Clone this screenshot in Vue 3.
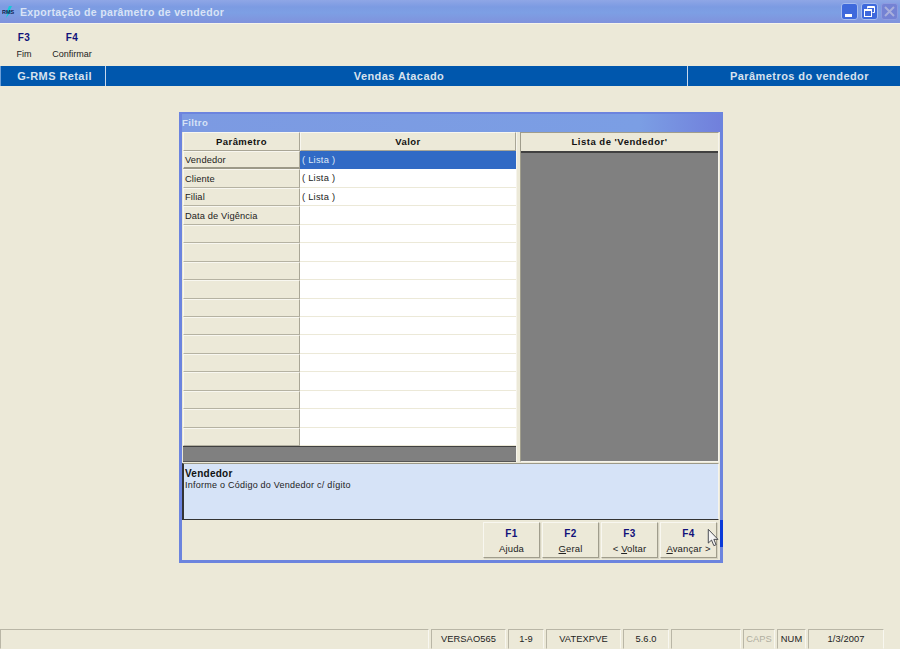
<script setup>
const rows = ['Vendedor', 'Cliente', 'Filial', 'Data de Vigência', '', '', '', '', '', '', '', '', '', '', '', '']
const values = ['( Lista )', '( Lista )', '( Lista )']
const buttons = [
  { key: 'F1', pre: 'A', u: 'j', post: 'uda' },
  { key: 'F2', pre: '', u: 'G', post: 'eral' },
  { key: 'F3', pre: '< ', u: 'V', post: 'oltar' },
  { key: 'F4', pre: '', u: 'A', post: 'vançar >' }
]
const status = [
  { t: '', w: 429 }, { t: 'VERSAO565', w: 75 }, { t: '1-9', w: 36 }, { t: 'VATEXPVE', w: 75 },
  { t: '5.6.0', w: 46 }, { t: '', w: 70 }, { t: 'CAPS', w: 32, off: true }, { t: 'NUM', w: 29 }, { t: '1/3/2007', w: 76 }
]
</script>

<template>
  <div class="screen">
    <header class="titlebar">
      <svg class="logo" width="16" height="14" viewBox="0 0 16 14">
        <path d="M7 1 L10 1 L7.5 6 L9.5 6 L4 13 L5.5 8 L4 8 Z" fill="#16c8d8" />
        <text x="0" y="9" class="logotext">RMS</text>
      </svg>
      <span class="title">Exportação de parâmetro de vendedor</span>
      <div class="winbtns">
        <span class="wbtn"><i class="min"></i></span>
        <span class="wbtn">
          <svg width="13" height="13" viewBox="0 0 13 13" fill="none" stroke="#fff" stroke-width="1">
            <path d="M4.5 3.5V1.5H11.5V7.5H9.5" /><path d="M4.5 2.5H11.5" />
            <rect x="1.5" y="4.5" width="7" height="7" /><path d="M1.5 5.5H8.5" />
          </svg>
        </span>
        <span class="wbtn off">
          <svg width="13" height="13" viewBox="0 0 13 13" fill="none" stroke="#a9afdc" stroke-width="2">
            <path d="M2 2L11 11M11 2L2 11" />
          </svg>
        </span>
      </div>
    </header>

    <div class="toolbar">
      <div class="tool"><b>F3</b><span>Fim</span></div>
      <div class="tool"><b>F4</b><span>Confirmar</span></div>
    </div>

    <div class="bluebar">
      <div class="bb b1">G-RMS Retail</div>
      <div class="bb b2">Vendas Atacado</div>
      <div class="bb b3">Parâmetros do vendedor</div>
    </div>

    <main class="stage">
      <section class="dialog">
        <div class="dtitle">Filtro</div>
        <div class="body">
          <div class="tablewrap">
            <div class="tbl">
              <div class="thead">
                <div class="th pcol">Parâmetro</div>
                <div class="th vcol">Valor</div>
              </div>
              <div class="tbody">
                <div v-for="(r, i) in rows" :key="i" class="tr">
                  <div class="pc" :class="{ active: i === 0 }">{{ r }}</div>
                  <div class="vc" :class="{ sel: i === 0 }">{{ values[i] }}</div>
                </div>
              </div>
              <div class="tfoot"></div>
            </div>
            <div class="list">
              <div class="lhead">Lista de 'Vendedor'</div>
              <div class="lbody"></div>
            </div>
          </div>
          <div class="info">
            <b>Vendedor</b>
            <span>Informe o Código do Vendedor c/ dígito</span>
          </div>
          <div class="actions">
            <button v-for="b in buttons" :key="b.key" class="btn">
              <b>{{ b.key }}</b>
              <span>{{ b.pre }}<u>{{ b.u }}</u>{{ b.post }}</span>
            </button>
            <i class="focusmark"></i>
            <svg class="cursor" width="12" height="19" viewBox="0 0 14 22">
              <path d="M1.5 1.5V17.5L5.3 14L8 20.5L10.6 19.4L8 13.2H12.8Z" fill="#f4f4f4" stroke="#30343c" stroke-width="1" />
            </svg>
          </div>
        </div>
      </section>
    </main>

    <footer class="statusbar">
      <div v-for="(s, i) in status" :key="i" class="cell" :class="{ off: s.off }" :style="{ width: s.w + 'px' }">{{ s.t }}</div>
    </footer>
  </div>
</template>

<style>
html, body { margin: 0; background: #ece9d8; }
</style>

<style scoped>
.screen {
  width: 900px; height: 649px; background: #ece9d8; display: flex; flex-direction: column;
  font-family: "Liberation Sans", Arial, sans-serif; font-size: 9px; color: #222; overflow: hidden;
}
.titlebar {
  height: 24px; flex: none; display: flex; align-items: center; padding-left: 2px; box-sizing: border-box;
  background: linear-gradient(180deg, #8fa6e6 0%, #7c9be2 30%, #7d9fe4 55%, #8092dc 100%);
  border-bottom: 1px solid #f6f4ea;
}
.logo { flex: none; }
.logotext { font: bold 5.5px "Liberation Sans", sans-serif; fill: #10204a; }
.title { margin-left: 2px; font: bold 10.5px "Liberation Sans", sans-serif; letter-spacing: .35px; color: #d9e3f6; }
.winbtns { margin-left: auto; display: flex; gap: 3px; padding-right: 2px; }
.wbtn {
  width: 17px; height: 17px; border-radius: 3px; display: flex; align-items: center; justify-content: center;
  background: #3e69dc; border: 1px solid #a6bcef; box-sizing: border-box; position: relative;
}
.wbtn.off { background: #7482d4; border-color: #8d9ae0; }
.min { width: 7px; height: 3px; background: #fff; position: absolute; left: 3px; bottom: 2px; }

.toolbar { height: 42px; flex: none; display: flex; }
.tool { width: 48px; display: flex; flex-direction: column; align-items: center; padding-top: 8px; box-sizing: border-box; }
.tool b { font: bold 10px "Liberation Sans", sans-serif; color: #12127a; letter-spacing: .4px; height: 14px; line-height: 12px; }
.tool span { font: 9px "Liberation Sans", sans-serif; color: #222; line-height: 12px; margin-top: 2px; white-space: nowrap; }

.bluebar { height: 20px; flex: none; display: flex; background: #0057ad; color: #d8e2ee; font: bold 11px "Liberation Sans", sans-serif; letter-spacing: .42px; }
.bb { display: flex; align-items: center; justify-content: center; box-sizing: border-box; border-right: 1px solid #c8d8ec; }
.b1 { width: 106px; border-left: 1px solid #6d9fd8; padding-left: 3px; }
.b2 { width: 582px; padding-left: 5px; }
.b3 { flex: 1; border-right: none; padding-left: 11px; }

.stage { flex: 1; position: relative; display: flex; align-items: flex-start; justify-content: center; padding-top: 26px; padding-left: 2px; min-height: 0; }
.dialog { width: 544px; height: 451px; box-sizing: border-box; border: 3px solid #6c84de; border-top-width: 2px; background: #ece9d8; display: flex; flex-direction: column; }
.dtitle { height: 18px; flex: none; box-sizing: border-box; color: #d6e2f6; font: bold 9.5px/18px "Liberation Sans", sans-serif; letter-spacing: .4px; background: linear-gradient(90deg, #7c9ae2, #7b9ee4 85%, #7180dc); }
.body { flex: 1; display: flex; flex-direction: column; padding: 0 1px; min-height: 0; }
.tablewrap { display: flex; flex: none; height: 330px; gap: 3px; }
.tbl { width: 334px; display: flex; flex-direction: column; border-right: 1px solid #f6f4ec; box-sizing: border-box; }
.thead { display: flex; height: 19px; flex: none; }
.th { font: bold 9.5px/17px "Liberation Sans", sans-serif; letter-spacing: .45px; text-align: center; box-sizing: border-box; background: #ece9d8; border: 1px solid; border-color: #f8f7f0 #a9a696 #a9a696 #f8f7f0; color: #111; }
.pcol { width: 117px; }
.vcol { flex: 1; }
.tbody { height: 295px; flex: none; display: flex; flex-direction: column; }
.tr { flex: 1; display: flex; min-height: 0; }
.pc { width: 117px; box-sizing: border-box; padding-left: 1px; display: flex; align-items: center; background: #ece9d8; border: 1px solid; border-color: #f8f7f0 #a9a696 #b5b2a2 #f8f7f0; font: 9.3px "Liberation Sans", sans-serif; letter-spacing: .12px; color: #222; }
.pc.active { border-bottom: 2px solid #9c9988; padding-top: 1px; }
.vc { flex: 1; box-sizing: border-box; padding-left: 2px; display: flex; align-items: center; background: #fff; border-bottom: 1px solid #ece9d8; font: 9.3px "Liberation Sans", sans-serif; letter-spacing: .25px; color: #222; }
.vc.sel { background: #316ac5; color: #dfe9f7; border-bottom-color: #316ac5; padding-top: 1px; }
.tfoot { flex: 1; background: #808080; border-top: 1px solid #404040; border-bottom: 1px solid #555; }
.list { flex: 1; display: flex; flex-direction: column; border: 1px solid; border-color: #a09d8c #f6f4ec #f6f4ec #a09d8c; box-sizing: border-box; }
.lhead { height: 20px; flex: none; box-sizing: border-box; background: #ece9d8; border-bottom: 2px solid #404040; text-align: center; font: bold 9.5px/18px "Liberation Sans", sans-serif; letter-spacing: .5px; color: #111; }
.lbody { flex: 1; background: #808080; }
.info { height: 57px; flex: none; box-sizing: border-box; margin-top: 1px; margin-left: -1px; background: #d6e3f7; border: 1px solid; border-color: #9c9988 #f6f4ec #333 #333; border-left-width: 2px; padding: 4px 0 0 1px; display: flex; flex-direction: column; font: 9px/11px "Liberation Sans", sans-serif; letter-spacing: .24px; color: #222; }
.info b { font-size: 10px; letter-spacing: .25px; color: #111; line-height: 12px; }
.actions { flex: 1; display: flex; justify-content: flex-end; align-items: flex-start; gap: 2px; padding: 2px 2px 0 0; position: relative; }
.btn { width: 57px; height: 36px; padding: 4px 0 0; margin: 0; box-sizing: border-box; background: #ece9d8; border: 1px solid; border-color: #f8f7f0 #a09d8c #a09d8c #f8f7f0; box-shadow: 1px 1px 0 #d6d3c2; display: flex; flex-direction: column; align-items: center; font: 9.5px "Liberation Sans", sans-serif; letter-spacing: .15px; color: #222; }
.btn b { font: bold 10px/13px "Liberation Sans", sans-serif; letter-spacing: .4px; color: #12127a; }
.btn span { line-height: 13px; margin-top: 2px; white-space: nowrap; }
.focusmark { position: absolute; right: -4px; top: 0; width: 3px; height: 27px; background: #0a3ad8; }
.cursor { position: absolute; right: 0; top: 8px; }

.statusbar { height: 20px; flex: none; display: flex; font: 9.3px/18px "Liberation Sans", sans-serif; letter-spacing: .1px; color: #222; }
.cell { box-sizing: border-box; height: 20px; margin-right: 2px; text-align: center; border: 1px solid; border-color: #b9b6a6 #f8f7f0 transparent #b9b6a6; white-space: nowrap; }
.cell.off { color: #b0aea0; }
</style>
